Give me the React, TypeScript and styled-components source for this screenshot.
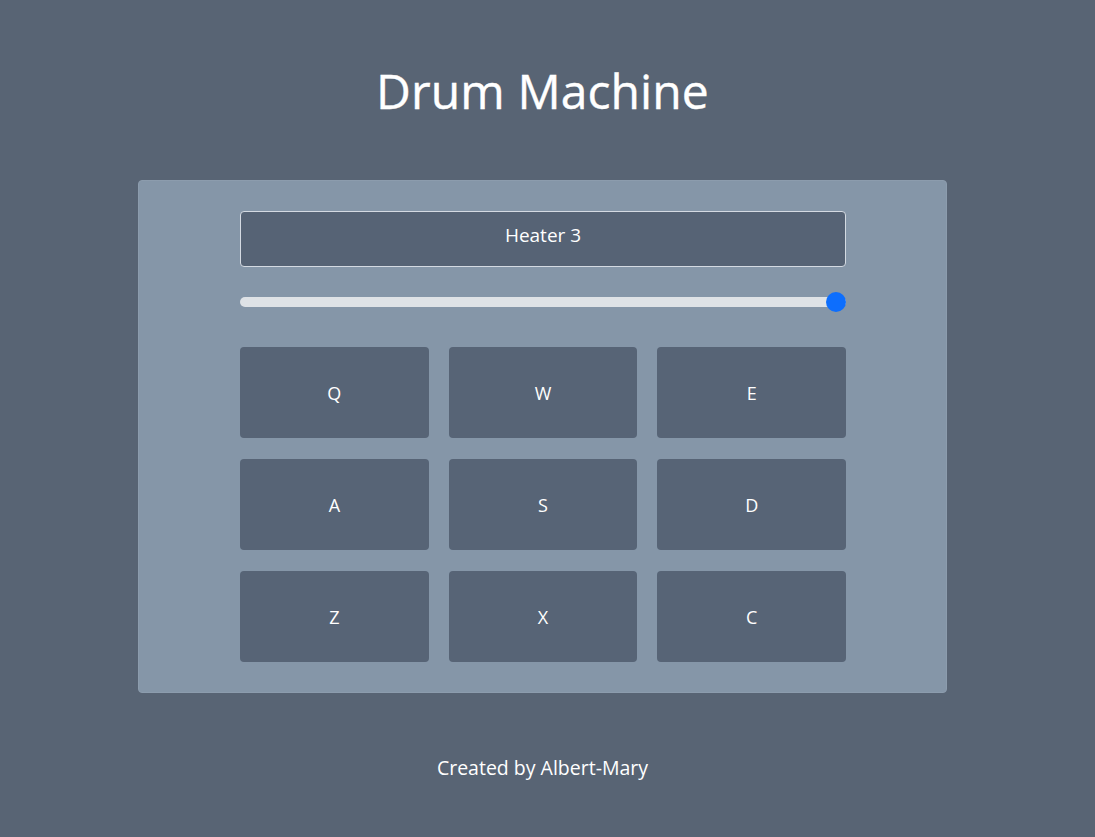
import React, { useState } from "react";
import styled, { createGlobalStyle } from "styled-components";

const PADS = ["Q", "W", "E", "A", "S", "D", "Z", "X", "C"];

export default function App() {
  const [volume, setVolume] = useState(100);
  return (
    <>
      <GlobalStyle />
      <Page>
        <Title>Drum Machine</Title>
        <Machine>
          <Display>Heater 3</Display>
          <Volume
            type="range"
            min={0}
            max={100}
            value={volume}
            onChange={(e) => setVolume(Number(e.target.value))}
          />
          <PadGrid>
            {PADS.map((key) => (
              <Pad key={key}>{key}</Pad>
            ))}
          </PadGrid>
        </Machine>
        <Footer>Created by Albert-Mary</Footer>
      </Page>
    </>
  );
}

const GlobalStyle = createGlobalStyle`
  html, body {
    margin: 0;
    background: #586474;
  }
  body {
    font-family: "Open Sans", "Noto Sans", sans-serif;
    color: #ffffff;
  }
`;

const Page = styled.div`
  min-height: 837px;
  padding-right: 10px;
  display: flex;
  flex-direction: column;
  align-items: center;
`;

const Title = styled.h1`
  margin: 62px 0 0;
  font-size: 48px;
  font-weight: 400;
  line-height: 58px;
  letter-spacing: 0.1px;
  -webkit-text-stroke: 0.4px #ffffff;
`;

const Machine = styled.div`
  box-sizing: border-box;
  width: 809px;
  margin-top: 60px;
  padding: 30px 100px 30px 101px;
  background: #8596a8;
  border: 1px solid #8c9cad;
  border-radius: 4px;
  display: flex;
  flex-direction: column;
`;

const Display = styled.div`
  box-sizing: border-box;
  height: 56px;
  padding-bottom: 8px;
  display: flex;
  align-items: center;
  justify-content: center;
  background: #566375;
  border: 1px solid #d4dae2;
  border-radius: 4px;
  font-size: 19px;
`;

const Volume = styled.input`
  -webkit-appearance: none;
  appearance: none;
  width: 100%;
  height: 20px;
  margin: 25px 0 35px;
  padding: 0;
  background: transparent;

  &::-webkit-slider-runnable-track {
    height: 10px;
    border-radius: 5px;
    background: #dee2e6;
  }
  &::-webkit-slider-thumb {
    -webkit-appearance: none;
    width: 20px;
    height: 20px;
    margin-top: -5px;
    border: none;
    border-radius: 50%;
    background: #0d6efd;
  }
`;

const PadGrid = styled.div`
  display: grid;
  grid-template-columns: repeat(3, 1fr);
  grid-auto-rows: 91px;
  column-gap: 20px;
  row-gap: 21px;
`;

const Pad = styled.button`
  border: none;
  border-radius: 4px;
  background: #576476;
  color: #ffffff;
  font-family: "Open Sans", "Noto Sans", sans-serif;
  font-size: 18px;
  cursor: pointer;
`;

const Footer = styled.footer`
  margin-top: 62px;
  font-size: 19.5px;
  line-height: 26px;
`;
